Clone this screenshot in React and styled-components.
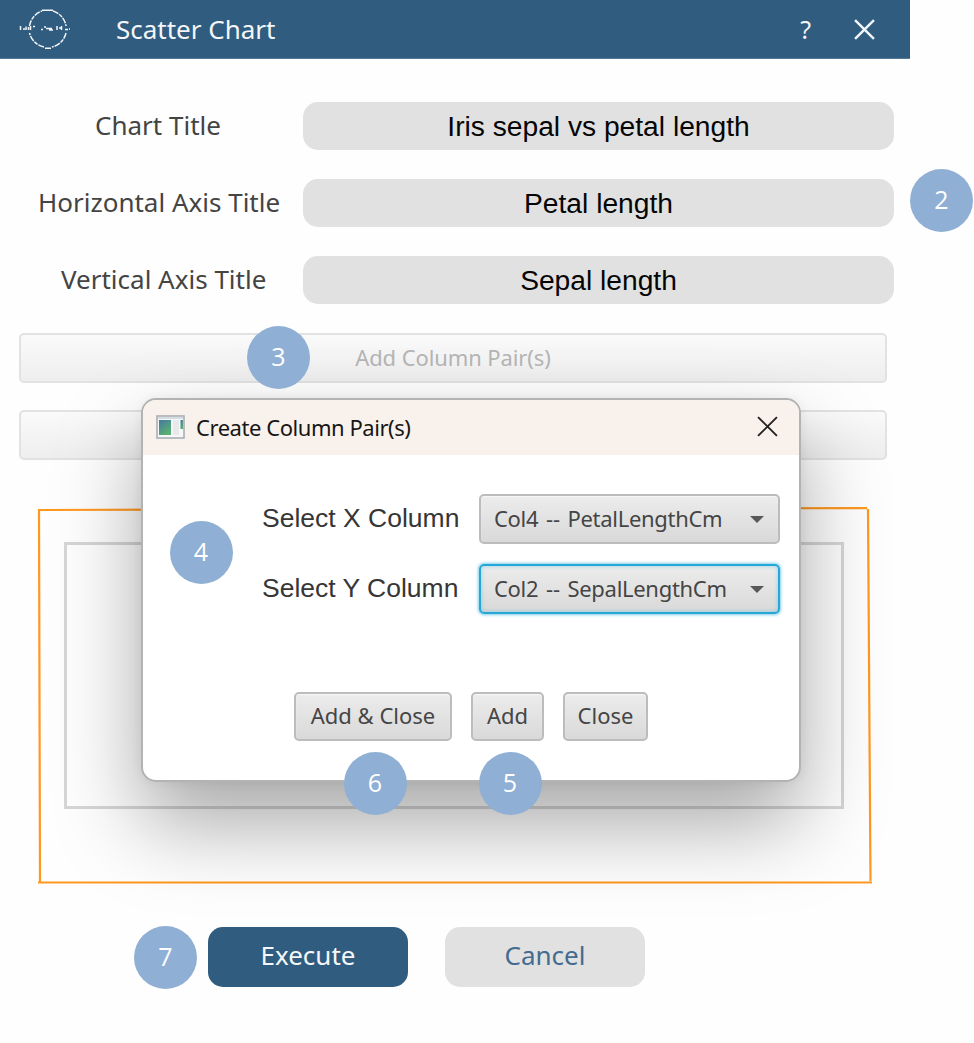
import React from 'react';
import styled, { createGlobalStyle, css } from 'styled-components';

const GlobalStyle = createGlobalStyle`
  * {
    box-sizing: border-box;
  }
  body {
    margin: 0;
    background: #fff;
  }
`;

const Page = styled.div`
  position: relative;
  width: 974px;
  height: 1043px;
  overflow: hidden;
  background: #fefefe;
  font-family: 'Noto Sans', sans-serif;
  font-size: 26px;
  color: #444;
`;

const Window = styled.main`
  width: 910px;
`;

const TitleBar = styled.header`
  display: flex;
  align-items: center;
  height: 59px;
  padding: 0 35px 0 18px;
  background: #305c80;
  border-bottom: 1px solid #557a99;
  color: #f4f6f8;
`;

const WindowTitle = styled.h1`
  flex: 1;
  margin: 0 0 0 45px;
  font-size: 26px;
  font-weight: 400;
  line-height: 59px;
`;

const Help = styled.span`
  margin-right: 43px;
  font-size: 25px;
`;

const Form = styled.div`
  display: flex;
  flex-direction: column;
  gap: 29px;
  padding: 43px 16px 0 0;
`;

const Field = styled.label`
  display: grid;
  grid-template-columns: 303px 1fr;
  align-items: center;
`;

const Label = styled.span`
  padding: 0 0 2px ${(props) => props.$indent}px;
  line-height: 46px;
  white-space: nowrap;
`;

const Input = styled.input`
  width: 100%;
  height: 48px;
  padding: 0;
  border: 0;
  border-radius: 15px;
  background: #e1e1e1;
  color: #050505;
  font-family: 'Liberation Sans', sans-serif;
  font-size: 28.2px;
  text-align: center;
`;

const PairButtons = styled.div`
  display: flex;
  flex-direction: column;
  gap: 27px;
  padding: 29px 23px 0 19px;
`;

const PairButton = styled.button`
  height: 50px;
  padding: 0 0 2px;
  border: 2px solid #e2e2e2;
  border-radius: 5px;
  background: linear-gradient(#fafafa, #eeeeee);
  color: #b5b5b5;
  font-family: inherit;
  font-size: 22px;
  letter-spacing: -0.1px;
`;

const Preview = styled.section`
  display: grid;
  height: 380px;
  margin: 45px 35px 0 36px;
`;

const Outline = styled.svg`
  grid-area: 1 / 1;
`;

const ChartBox = styled.div`
  grid-area: 1 / 1;
  margin: 37px 31px 76px 28px;
  border: 3px solid #d6d6d6;
`;

const Footer = styled.footer`
  display: flex;
  gap: 37px;
  padding: 42px 0 0 208px;
`;

const FooterButton = styled.button`
  width: 200px;
  height: 60px;
  padding: 0 0 4px;
  border: 0;
  border-radius: 15px;
  background: ${(props) => (props.$primary ? '#305c80' : '#e1e1e1')};
  color: ${(props) => (props.$primary ? '#f4f6f8' : '#446c90')};
  font-family: inherit;
  font-size: 26px;
`;

const Dialog = styled.div`
  position: absolute;
  left: 141px;
  top: 398px;
  width: 660px;
  height: 384px;
  border: 2px solid #b3b3b3;
  border-radius: 15px;
  background: #fff;
  box-shadow: 0 42px 84px rgba(0, 0, 0, 0.34), 0 0 12px rgba(0, 0, 0, 0.06);
  font-size: 22px;
`;

const DialogHeader = styled.div`
  display: flex;
  align-items: center;
  height: 55px;
  padding: 0 21px 2px 13px;
  border-radius: 13px 13px 0 0;
  background: #f9f1eb;
`;

const DialogTitle = styled.h2`
  flex: 1;
  margin: 0 0 0 11px;
  color: #161616;
  font-size: 22px;
  font-weight: 400;
  letter-spacing: -0.45px;
`;

const Selects = styled.div`
  display: flex;
  flex-direction: column;
  gap: 20px;
  padding: 39px 19px 0 119px;
`;

const SelectRow = styled.div`
  display: flex;
  align-items: center;
  justify-content: space-between;
`;

const SelectLabel = styled.span`
  padding-bottom: 2px;
  color: #363636;
  font-family: 'Liberation Sans', sans-serif;
  font-size: 26.5px;
  white-space: nowrap;
`;

const raised = css`
  border: 2px solid #bcbcbc;
  border-radius: 5px;
  background: linear-gradient(#ececec, #d9d9d9);
  box-shadow: inset 0 1px 1px #f8f8f8;
  color: #454545;
`;

const Select = styled.div`
  ${raised}
  display: flex;
  align-items: center;
  justify-content: space-between;
  width: 301px;
  height: 50px;
  padding: 0 14px 3px 13px;
  letter-spacing: -0.3px;
  word-spacing: 2.4px;
  white-space: nowrap;
  ${(props) =>
    props.$focused &&
    css`
      border-color: #25a8d8;
      box-shadow: 0 0 3px 1px rgba(3, 158, 211, 0.5), inset 0 0 4px rgba(3, 158, 211, 0.35);
    `}
`;

const Caret = styled.span`
  margin-top: 4px;
  border: 7px solid transparent;
  border-top-color: #585858;
  border-bottom: 0;
`;

const Actions = styled.div`
  display: flex;
  gap: 19px;
  padding: 78px 0 0 151px;
`;

const Action = styled.button`
  ${raised}
  width: ${(props) => props.$width}px;
  height: 49px;
  padding: 0 0 3px;
  font-family: inherit;
  font-size: 22px;
  white-space: nowrap;
`;

const Badge = styled.div`
  position: absolute;
  left: ${(props) => props.$x}px;
  top: ${(props) => props.$y}px;
  width: 63px;
  height: 63px;
  border-radius: 50%;
  background: #90afd4;
  color: #fff;
  font-family: 'Open Sans', sans-serif;
  font-size: 25px;
  line-height: 61px;
  text-align: center;
`;

const fields = [
  { label: 'Chart Title', value: 'Iris sepal vs petal length', indent: 95 },
  { label: 'Horizontal Axis Title', value: 'Petal length', indent: 38 },
  { label: 'Vertical Axis Title', value: 'Sepal length', indent: 61 },
];

const selects = [
  { label: 'Select X Column', value: 'Col4 -- PetalLengthCm' },
  { label: 'Select Y Column', value: 'Col2 -- SepalLengthCm', focused: true },
];

const badges = [
  { n: 2, x: 910, y: 169 },
  { n: 3, x: 247, y: 326 },
  { n: 4, x: 169.5, y: 521 },
  { n: 5, x: 478.5, y: 751.5 },
  { n: 6, x: 343.5, y: 751.5 },
  { n: 7, x: 134, y: 925.5 },
];

const Logo = () => (
  <svg width="53" height="42" viewBox="0 0 53 42" fill="none" stroke="#f2f5f8">
    <path
      d="M11.5 18A18.7 18.7 0 0 1 24 3M35 3A18.7 18.7 0 0 1 48 18M48 25A18.7 18.7 0 0 1 34 39M26 39A18.7 18.7 0 0 1 11.500 25"
      strokeWidth="1.5"
      strokeDasharray="6 1 4 1"
    />
    <path d="M24 2.300h11M27 40.300h6" strokeWidth="1.500" />
    <path
      d="M2.500 18v4M6 20v2M8 18.500v3.500M10.500 19v3M12.500 18v4M15 18.500h2M23 21.500h2M26 19h2M28 20.500h6M31 22h4M39 18v4M41 20h2M43.500 18v4M47 21.500h3M51 21h1"
      strokeWidth="1.500"
    />
  </svg>
);

const Cross = ({ size, color, width }) => (
  <svg width={size} height={size} viewBox="0 0 20 20" stroke={color} strokeWidth={width}>
    <path d="M1 1L19 19M19 1L1 19" />
  </svg>
);

const AppIcon = () => (
  <svg width="29" height="24" viewBox="0 0 29 24">
    <defs>
      <linearGradient id="pane" x1="0" y1="0" x2="0.6" y2="1">
        <stop offset="0" stopColor="#4379a0" />
        <stop offset="1" stopColor="#5cb071" />
      </linearGradient>
    </defs>
    <rect x="1" y="1" width="27" height="22" fill="#f5f7f8" stroke="#a9afb5" strokeWidth="1.6" />
    <path d="M2 3h25" stroke="#d5dde4" strokeWidth="2" />
    <rect x="3" y="5" width="12" height="15" fill="url(#pane)" />
    <rect x="17" y="5" width="6" height="15" fill="#e7e9ea" />
    <rect x="24.5" y="5" width="2.5" height="9" fill="url(#pane)" />
  </svg>
);

const App = () => {
  return (
    <Page>
      <GlobalStyle />
      <Window>
        <TitleBar>
          <Logo />
          <WindowTitle>Scatter Chart</WindowTitle>
          <Help>?</Help>
          <Cross size={21} color="#f4f6f8" width={2.3} />
        </TitleBar>

        <Form>
          {fields.map((field) => (
            <Field key={field.label}>
              <Label $indent={field.indent}>{field.label}</Label>
              <Input defaultValue={field.value} />
            </Field>
          ))}
        </Form>

        <PairButtons>
          <PairButton>Add Column Pair(s)</PairButton>
          <PairButton />
        </PairButtons>

        <Preview>
          <Outline width="839" height="380" viewBox="0 0 839 380" fill="none" stroke="#ff981f" strokeWidth="2.2">
            <path d="M2 5L831 3M832 4L834.5 376M3 5L4 377M2 377.5H836" />
          </Outline>
          <ChartBox />
        </Preview>

        <Footer>
          <FooterButton $primary>Execute</FooterButton>
          <FooterButton>Cancel</FooterButton>
        </Footer>
      </Window>

      <Dialog>
        <DialogHeader>
          <AppIcon />
          <DialogTitle>Create Column Pair(s)</DialogTitle>
          <Cross size={21} color="#222" width={1.8} />
        </DialogHeader>
        <Selects>
          {selects.map((item) => (
            <SelectRow key={item.label}>
              <SelectLabel>{item.label}</SelectLabel>
              <Select $focused={item.focused}>
                {item.value}
                <Caret />
              </Select>
            </SelectRow>
          ))}
        </Selects>
        <Actions>
          <Action $width={158}>Add &amp; Close</Action>
          <Action $width={73}>Add</Action>
          <Action $width={85}>Close</Action>
        </Actions>
      </Dialog>

      {badges.map((badge) => (
        <Badge key={badge.n} $x={badge.x} $y={badge.y}>{badge.n}</Badge>
      ))}
    </Page>
  );
};

export default App;
